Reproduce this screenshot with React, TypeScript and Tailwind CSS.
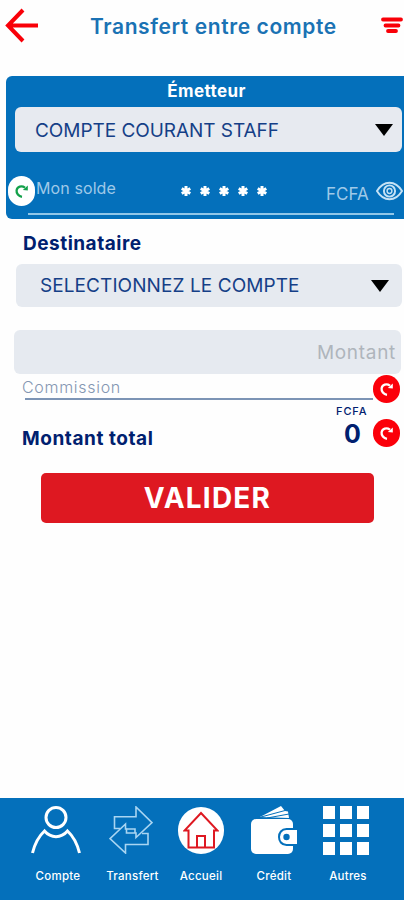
import { clsx } from 'clsx'
import type { ReactNode } from 'react'

function RefreshBadge({ className }: { className?: string }) {
  return (
    <button
      aria-label="Actualiser"
      className={clsx('flex h-7 w-[27px] shrink-0 items-center justify-center rounded-full', className)}
    >
      <svg width="16" height="16" viewBox="0 0 16 16" fill="none" stroke="currentColor" strokeWidth="2.300">
        <path d="M8 13.800C4.600 13.200 2.200 10.200 2.600 7.400C3.200 3.600 7.500 2.200 11 4.600" />
        <path d="M13.800 2.400V7.600L8.800 7Z" fill="currentColor" stroke="none" />
      </svg>
    </button>
  )
}

function Caret() {
  return (
    <svg width="18" height="12" viewBox="0 0 18 12" className="shrink-0">
      <path d="M0 0H18L9 12Z" fill="#000" />
    </svg>
  )
}

function NavItem({ label, width, children }: { label: string; width: string; children: ReactNode }) {
  return (
    <button className={clsx('flex shrink-0 flex-col items-center', width)}>
      <span className="flex h-12 items-center justify-center">{children}</span>
      <span className="mt-[15px] text-[11.500px] leading-[14px] font-medium tracking-[0.25px]">{label}</span>
    </button>
  )
}

export default function App() {
  return (
    <div className="flex h-[900px] w-[404px] flex-col overflow-hidden bg-[#fefefe] font-['Inter',sans-serif] text-[#00206f]">
      {/* Header */}
      <header className="flex h-[76px] shrink-0 items-start pr-px pl-[5px]">
        <button aria-label="Retour" className="mt-2">
          <svg width="34" height="35" viewBox="0 0 34 35" fill="none" stroke="#f90008" strokeWidth="4">
            <path d="M18 2L3 17.500L18 33M3 17.500H33" />
          </svg>
        </button>
        <h1 className="mt-[13px] ml-[51px] w-[248px] text-[21px] leading-[28px] font-semibold tracking-[0.6px] whitespace-nowrap text-[#1a72b4]">
          Transfert entre compte
        </h1>
        <button aria-label="Menu" className="mt-[17px] ml-auto">
          <svg width="22" height="17" viewBox="0 0 22 17" stroke="#f90008" strokeWidth="3.800" strokeLinecap="round">
            <path d="M2 2.500H20M4.500 8.500H17.500M7 14H15" />
          </svg>
        </button>
      </header>

      {/* Sender account */}
      <section className="ml-1.5 h-[143px] shrink-0 rounded-md rounded-r-none bg-[#0470bb] pr-0.5 pl-[9px] text-white">
        <h2 className="h-[31px] pt-1 pr-1 text-center text-[17px] leading-[22px] font-bold tracking-[0.4px]">
          Émetteur
        </h2>
        <button className="flex h-[45px] w-full items-center justify-between rounded-md bg-[#e7eaf0] pr-[9px] pl-5 text-[19px] tracking-[-0.05px] text-[#153f87]">
          <span className="pt-[3px]">COMPTE COURANT STAFF</span>
          <Caret />
        </button>
        <div className="-mr-0.5 -ml-[7px] flex h-[62px] pt-6 text-[#9fc9e8]">
          <RefreshBadge className="h-[30px]! bg-white text-[#13a14a]" />
          <span className="ml-px w-[145px] shrink-0 text-[16px] leading-6 tracking-[0.1px]">Mon solde</span>
          <span className="flex h-[30px] shrink-0 items-center gap-[9px] text-white">
            {[0, 1, 2, 3, 4].map((i) => (
              <svg key={i} width="10" height="10" viewBox="0 0 10 10" stroke="currentColor" strokeWidth="3">
                <path d="M5 0V10M0.700 2.500L9.300 7.500M9.300 2.500L0.700 7.500" />
              </svg>
            ))}
          </span>
          <span className="mt-1.5 ml-[59px] w-[50px] shrink-0 text-[17px] leading-6">FCFA</span>
          <svg
            width="27"
            height="20"
            viewBox="0 0 28 20"
            fill="none"
            stroke="#c5e2f5"
            strokeWidth="2"
            className="mt-[5px] shrink-0"
          >
            <path d="M1 10C8-1.500 20-1.500 27 10C20 21.500 8 21.500 1 10Z" />
            <circle cx="14" cy="10" r="5.800" />
            <circle cx="14" cy="10" r="2.500" strokeWidth="1.500" />
          </svg>
        </div>
        <div className="-mt-px mr-2 ml-[13px] h-0.5 bg-[#91c7e8]" />
      </section>

      {/* Recipient account */}
      <main className="flex flex-1 flex-col">
        <h2 className="mt-[13px] ml-[23px] text-[19px] leading-6 font-bold tracking-[0.5px]">Destinataire</h2>
        <button className="mt-2 mr-0.5 ml-4 flex h-[43px] items-center justify-between rounded-md bg-[#e6eaf0] pr-[13px] pl-6 text-[19px] tracking-[0.08px] text-[#153f87]">
          <span className="pt-[2px]">SELECTIONNEZ LE COMPTE</span>
          <Caret />
        </button>
        <input
          aria-label="Montant"
          placeholder="Montant"
          className="mt-[23px] mr-[3px] ml-3.5 h-[44px] rounded-md bg-[#e6eaf0] pr-[5px] text-right text-[19px] tracking-[0.7px] placeholder:text-[#afb5bc]"
        />

        <div className="flex h-[29px] pr-1 pl-[22px]">
          <div className="w-[351px] text-[#8496b2]">
            <div className="mt-px h-[23px] text-[16px] leading-[24px] font-light tracking-[0.7px]">Commission</div>
            <div className="ml-[3px] h-0.5 bg-[#7c94b5]" />
          </div>
          <RefreshBadge className="mt-px bg-[#fb000a] text-white" />
        </div>
        <div className="flex h-[44px] items-start pr-1 pl-[22px]">
          <span className="mt-6 w-[314px] text-[19px] leading-6 font-bold tracking-[0.55px]">Montant total</span>
          <div className="mt-[2px] flex w-[37px] flex-col">
            <span className="text-[11px] leading-[12px] font-medium tracking-[0.9px]">FCFA</span>
            <span className="mt-[5px] pl-2 text-[25px] leading-6 font-bold">0</span>
          </div>
          <RefreshBadge className="mt-4 bg-[#fb000a] text-white" />
        </div>

        <button className="mt-[26px] mr-[30px] ml-[41px] h-[50px] shrink-0 rounded-[5px] bg-[#de1821] text-[28px] font-bold tracking-[1.2px] text-white">
          VALIDER
        </button>
      </main>

      {/* Bottom navigation */}
      <nav className="flex h-[102px] shrink-0 bg-[#0470bb] pt-2 pl-[21px] text-white">
        <NavItem label="Compte" width="w-[74px]">
          <svg width="50" height="48" viewBox="0 0 50 48" fill="none" stroke="currentColor" strokeWidth="3" className="mr-1">
            <ellipse cx="25" cy="11.500" rx="10" ry="10" />
            <path d="M1.500 47C4 37 8 30 13.500 25C20 32.500 30 32.500 36.500 25C42 30 46 37 48.500 47" />
          </svg>
        </NavItem>
        <NavItem label="Transfert" width="w-[75px]">
          <svg width="44" height="48" viewBox="0 0 44 48" fill="none" stroke="#a9d5f2" strokeWidth="1.600" className="mr-1">
            <path d="M11 22.500H5.500V10.700H27V1L43 16.700L27 31.500V27H17.500V22.500" />
            <path d="M33 27.500H39V38.500H16.500V47L1 32.700L16.500 18V23H26V27" />
          </svg>
        </NavItem>
        <NavItem label="Accueil" width="w-[62px]">
          <span className="flex h-[47px] w-[46px] items-center justify-center rounded-full bg-white">
            <svg width="36" height="38" viewBox="0 0 36 38" fill="none" stroke="#de1821" strokeWidth="2">
              <path d="M5.500 36.500H31V19.500H34.500L18 2L1.500 19.500H5.500Z" />
              <path d="M14 36.500V25H22V36.500" />
            </svg>
          </span>
        </NavItem>
        <NavItem label="Crédit" width="w-[84px]">
          <svg width="46" height="48" viewBox="0 0 46 48" fill="none">
            <path d="M9 11L30 0L34 5L37 5.500L38 12Z" fill="currentColor" />
            <path d="M10 11L34 4.500M16 12L38 8" stroke="#0470bb" strokeWidth="1" />
            <rect y="13" width="42" height="35" rx="5" fill="currentColor" />
            <path d="M46 23H35.500C25.500 23 25.500 39 35.500 39H46Z" fill="currentColor" stroke="#0470bb" strokeWidth="2" />
            <circle cx="35.500" cy="31" r="3.200" fill="#0470bb" />
            <path d="M45 24V38" stroke="currentColor" strokeWidth="2" />
          </svg>
        </NavItem>
        <NavItem label="Autres" width="w-[64px]">
          <span className="grid grid-cols-3 gap-x-[5px] gap-y-[5px] pr-1">
            {Array.from({ length: 9 }, (_, i) => (
              <span key={i} className="h-[13px] w-3 bg-white" />
            ))}
          </span>
        </NavItem>
      </nav>
    </div>
  )
}
